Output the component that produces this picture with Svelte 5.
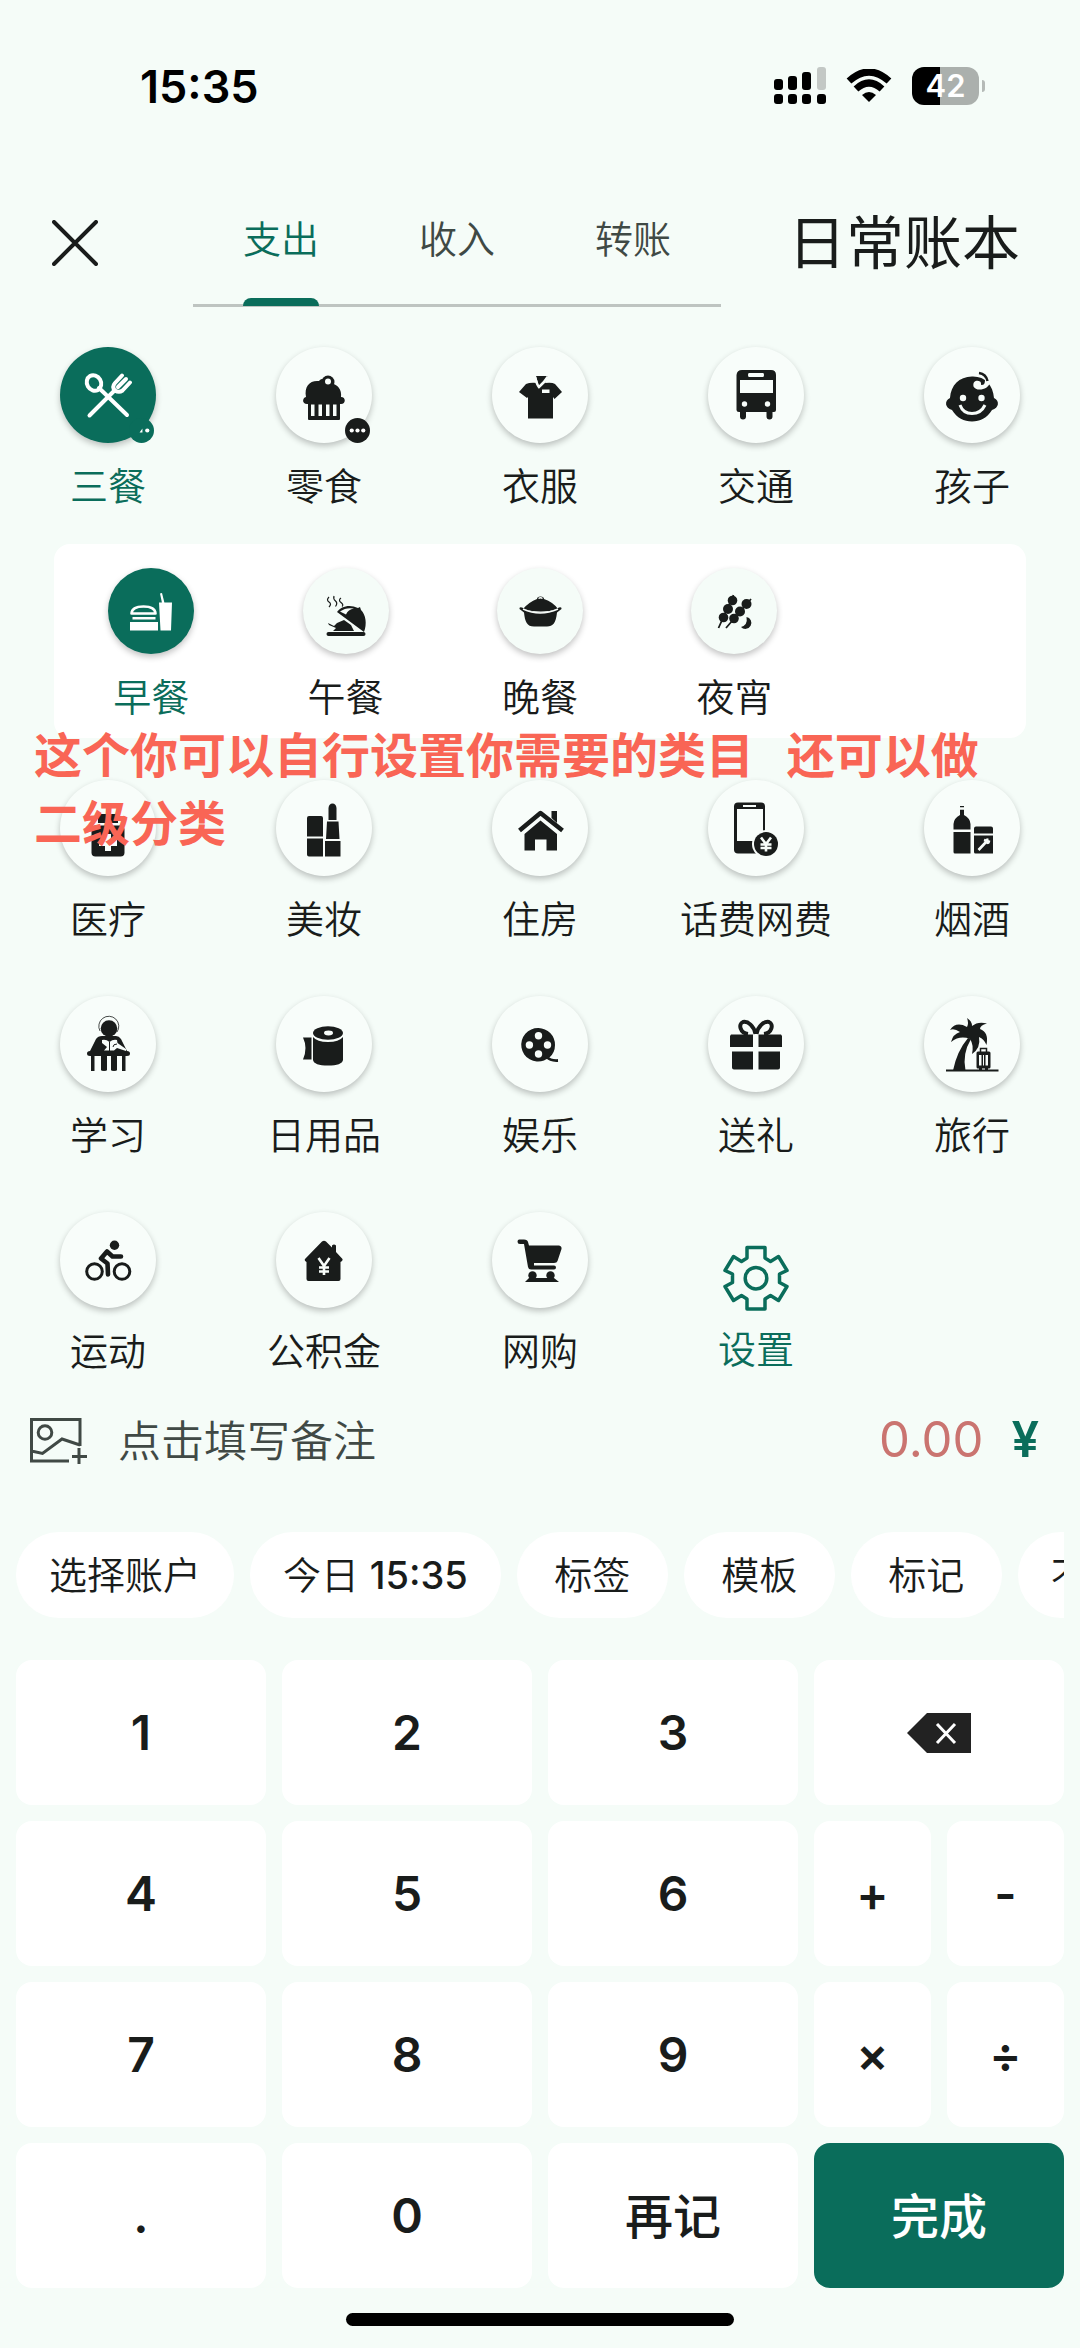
<script>
  const icons = {
    meals: '<g class="line"><ellipse cx="34" cy="36" rx="7" ry="8" transform="rotate(-30 34 36)"/><path d="M39 41 67 68M29.500 68.500 55 43M62 28.500 55 36Q51.500 40 55 43.500 59 46 62.500 43.500L70 35.500M66 32 58 40"/></g>',
    snack: '<circle cx="52" cy="35" r="6.500"/><path d="M30 50C28 39 34 33 43 34 46 30 52 32 54 36 62 37 66 43 65 50 70 50 70 57 65 57H31C26 57 26 51 30 50Z"/><rect x="32" y="55" width="32" height="18" rx="1"/><circle class="cut" cx="52" cy="34.500" r="3"/><path class="cut" d="M35 57.500h3.500V69H35zM42.500 57.500H46V69h-3.500zM50 57.500h3.500V69H50zM57 57.500h3.500V69H57z"/>',
    clothes: '<path d="M44 29 56 29 53 36Q60 35 63 37L70 45 62.500 52 61 50V71.500H36V50L35 51 27 45 34 37Q38 35 46 36Z"/><path class="cutline" d="M43 30Q45 38 47 40 52 36 56 29.500"/><path class="cut" d="M50 42.500h7.500V46H50z"/>',
    bus: '<path d="M34 23H63Q68 23 68 28V63Q68 65 66 65H64.500V69.500A3 3 0 0 1 58.500 69.500V65H38V69.500A3 3 0 0 1 32 69.500V65H31Q28.500 65 28.500 63V28Q29 23 34 23Z"/><path class="cut" d="M41 26H55Q56 26 56 28T55 30H41Q40 30 40 28T41 26ZM32 33H65V46H32Z"/><circle class="cut" cx="36.500" cy="57" r="2.700"/><circle class="cut" cx="59.500" cy="57" r="2.700"/>',
    child: '<path d="M48 29.500C61 29 69 38 70 51 76 54 75 61 68 63 63 71 56 74.500 48 74.500 40 74.500 33 71 28 63 21 61 20 54 26 51 27 38 35 30 48 29.500Z"/><path class="cut" d="M66 35C65 43 52 45 49.500 39.500 48.500 34 53 33 56 34.500 58 36 56 38 58 38 61 38 61 35 61 31L68 32Z"/><path d="M55 26Q62 27 63.500 34" fill="none" stroke="currentColor" stroke-width="2.500"/><circle class="cut" cx="39" cy="51" r="3.200"/><circle class="cut" cx="57.500" cy="51" r="3.200"/><path class="cutline thick" d="M36 58Q39 66.500 48 66.500T61 58"/>',
    breakfast: '<path d="M23.500 45.500Q24 38.500 35.500 38.500T47.500 45.500Z" fill="none" stroke="currentColor" stroke-width="2.600" stroke-linejoin="round"/><path d="M24.500 49H47.500V51.500H24.500ZM22 54H50V62.500H22ZM51 34.500H64L63 62.500H52.500ZM52 25.500 54 25 56.500 35H54Z"/>',
    lunch: '<g fill="none" stroke="currentColor" stroke-width="1.200"><path d="M26 29q-3 3 0 5t0 5M31 28q-1 3 1.500 5t0 5.500M38 30q-3 2 0 4.500t1 4"/></g><path d="M34 44C38 38 47 36 55 40L57 39 58 42C63 47 64 56 61 64Z"/><path class="cut" d="M37 43.500Q43 39 51 40.500 45 41.500 43 46.500Z"/><path d="M25 55 31 58 34 55 41 52 48 57 51 63H30L33 60 26 57Z"/><rect x="23.500" y="64" width="39" height="4" rx="2"/>',
    dinner: '<path d="M26 41Q32 34 40 31 40 28.500 43.500 28.500T47 31Q56 34 61 41 44 46 26 41Z"/><path d="M22.500 41Q22 38.500 25 39.500 44 50 62 39.500 65 38.500 64.500 41L60 44.500C59 55 56 58.500 50 58.500H37C30 58.500 28 54 27 44.500Z"/><path class="cutline thin" d="M26 41Q43 49 61 41M41.500 30.500Q43.500 29 45.500 30.500"/>',
    supper: '<path d="M42.500 27 27.500 60M60 31 35 60" stroke="currentColor" stroke-width="1.800"/><circle cx="41.500" cy="32.500" r="4.800"/><circle cx="37" cy="41" r="5"/><circle cx="32.500" cy="49.500" r="4.800"/><circle cx="55.500" cy="36" r="5"/><circle cx="49" cy="43.500" r="5"/><circle cx="43" cy="50.500" r="4.800"/><path d="M55.500 49A6 6 0 1 1 50 59Q57 57 55.500 49Z"/>',
    medical: '<path d="M40 34H56Q58 34 58 36V43H38V36Q38 34 40 34Z"/><rect x="31.500" y="45.500" width="33" height="31" rx="4"/><path class="cut" d="M45 54H51V60H57V66H51V71H45V66H39V60H45Z"/>',
    beauty: '<path d="M52.500 40V28Q53 23.500 56.500 23.500T60.500 28V40ZM51 41.500H62.500L63.500 59H50ZM49 61H64.500V76.500H49ZM31 38Q31 36 33 36H45Q47 36 47 38V56.500H31ZM31 58.500H47V76.500H33Q31 76.500 31 74.500Z"/>',
    home: '<path d="M48.500 40.500 32.500 54V70.500H43V59.500H54.500V70.500H65V54Z"/><path d="M27.500 50.500 48.500 33 70.500 50.500" fill="none" stroke="currentColor" stroke-width="4.500" stroke-linejoin="round"/><path d="M59.500 31H65V43L59.500 38Z"/>',
    phone: '<rect x="26" y="22.500" width="31" height="51" rx="4"/><path class="cut" d="M29 29H55V61H29ZM35 25H48V27H35Z"/><circle class="cut" cx="58" cy="64" r="14"/><circle cx="58" cy="64" r="12"/><path class="cutline" d="M53 57.500 58 64 63 57.500M58 64V71.500M52.500 64.500H63.500M52.500 68H63.500"/>',
    drink: '<path d="M36 26H40V35Q46 38 46.500 44V49.500H29.500V44Q30 38 36 35ZM29.500 52H46.500V73.500H31Q29.500 73.500 29.500 72ZM52 46.500H67Q69 46.500 69 48.500V53.500H50V48.500Q50 46.500 52 46.500ZM50 55.500H69V73.500H51.500Q50 73.500 50 72Z"/><path class="cutline" d="M35 28.500H41M54.500 70 63 61M60 60 66 62M63 58.500 64 64"/>',
    study: '<circle cx="49" cy="32.500" r="8.300"/><path d="M40 35A10 10 0 1 1 57 36" fill="none" stroke="currentColor" stroke-width=".8"/><path d="M42 40H56Q59 40 61 43L67 55Q70 55 70 57.500T67 60H65.500V75H62V60H57V74Q57 75 54 75T51 74V60H47V74Q47 75 44 75T41 74V60H34.500V75H31V60H30Q27 60 27 57.500T30 55L36 43Q38 40 42 40Z"/><path class="cut" d="M42 44Q46 43 49.500 46 53 43 57 44L57.500 47 66 53V55L57 52 54 54.500H44L47 51 42 47Z"/><path d="M49.500 46V55M53 51Q53 48 57 48" fill="none" stroke="currentColor" stroke-width="1"/>',
    daily: '<ellipse cx="52" cy="37" rx="15" ry="6.800"/><ellipse class="cut" cx="52.500" cy="37" rx="4.500" ry="2.400"/><path d="M37 41Q41 46 52 46T67 41V64Q66 69.500 52 69.500T37 64ZM27 41.500H35.500V63.500H27Q32 52 27 41.500Z"/>',
    film: '<path d="M46.500 32A16.800 16.800 0 1 0 52 64.500Q54 63 57 62 63 57 63 49A16.800 16.800 0 0 0 46.500 32Z"/><path d="M55 61Q58 65 66 64.500" fill="none" stroke="currentColor" stroke-width="2.800"/><circle class="cut" cx="46.500" cy="39.800" r="3.700"/><circle class="cut" cx="46.500" cy="58" r="3.700"/><circle class="cut" cx="37.400" cy="49" r="3.700"/><circle class="cut" cx="55.500" cy="49" r="3.700"/>',
    gift: '<path d="M23 38.500H45V51H22V40ZM50.500 38.500H73L74 40V51H50.500ZM24 55.500H45V73.500H26Q24 73.500 24 71.500ZM50.500 55.500H72V71.500Q72 73.500 70 73.500H50.500Z"/><path d="M47.500 38C46 30 40 25 35 26 30 28 32 37 40 38M48.500 38C50 30 56 25 61 26 66 28 64 37 56 38" fill="none" stroke="currentColor" stroke-width="4"/>',
    travel: '<path d="M44 42Q33 55 29 74.500H41.500Q38 58 47 43Z"/><path d="M43 22Q48 25 48 30 54 25 63 27.500 56 29 56 33 65 36 62.500 49 60 43 55 41 57 52 48 58 50 49 46 43 36 39 27 46 29 38 36 36 30 32 26 34 32 25 43 31 45 27 43 22Z"/><path d="M22 74.500H74.500" stroke="currentColor" stroke-width="2"/><path d="M56.500 56V52.500H62.500V56" fill="none" stroke="currentColor" stroke-width="1.500"/><path d="M54 55.500H65Q66.500 55.500 66.500 57V71Q66.500 72.500 65 72.500H54Q52.500 72.500 52.500 71V57Q52.500 55.500 54 55.500ZM55 72H58V75H55ZM61 72H64V75H61Z"/><path class="cut" d="M55 59H57.500V69.500H55ZM61.500 59H64V69.500H61.500ZM59 59H60V69.500H59Z"/>',
    sport: '<g fill="none" stroke="currentColor" stroke-width="3"><circle cx="34.500" cy="59.500" r="7.800"/><circle cx="62" cy="59.500" r="7.800"/><path d="M61 44.500H52.500L47 39.500 41 46.500 47.500 51.500 48 62.500" stroke-width="4.600" stroke-linecap="round" stroke-linejoin="round"/></g><circle cx="54.500" cy="33.200" r="4.700"/>',
    fund: '<path d="M46 29.500Q48 28 50 29.500L56 35.500V33.500Q58 31.500 60 33.500V40L66.500 47Q67 49 64.500 50V67Q64.500 69 62.500 69H32.500Q30.500 69 30.500 67V50Q28 49 29 47Z"/><path class="cutline" d="M42.500 46 48 54 53.500 46M48 54V63M43 55.500H53M43 59.500H53"/>',
    cart: '<path d="M27.500 27.500H32Q35.500 27.500 36 30L37 33.500H67Q70 34 69.500 37L65.500 49Q65 51 62 51H42V53.500H62Q64 53.500 64 55.500T62 57.500H39Q36.500 57.500 36 55L32 32H28Q25.500 32 25.500 29.700T27.500 27.500Z"/><circle cx="40.500" cy="63.500" r="4.200"/><circle cx="58.500" cy="63.500" r="4.200"/><path d="M33 70 37 66H62L67 70Z"/>'
  };

  const firstRow = [
    { name: '三餐', icon: 'meals', more: true },
    { name: '零食', icon: 'snack', more: true },
    { name: '衣服', icon: 'clothes' },
    { name: '交通', icon: 'bus' },
    { name: '孩子', icon: 'child' }
  ];

  const subCategories = [
    { name: '早餐', icon: 'breakfast' },
    { name: '午餐', icon: 'lunch' },
    { name: '晚餐', icon: 'dinner' },
    { name: '夜宵', icon: 'supper' }
  ];

  const otherRows = [
    { name: '医疗', icon: 'medical' },
    { name: '美妆', icon: 'beauty' },
    { name: '住房', icon: 'home' },
    { name: '话费网费', icon: 'phone' },
    { name: '烟酒', icon: 'drink' },
    { name: '学习', icon: 'study' },
    { name: '日用品', icon: 'daily' },
    { name: '娱乐', icon: 'film' },
    { name: '送礼', icon: 'gift' },
    { name: '旅行', icon: 'travel' },
    { name: '运动', icon: 'sport' },
    { name: '公积金', icon: 'fund' },
    { name: '网购', icon: 'cart' }
  ];

  const tabs = ['支出', '收入', '转账'];
  const chips = [
    { label: '选择账户' },
    { label: '今日', time: '15:35' },
    { label: '标签' },
    { label: '模板' },
    { label: '标记' },
    { label: '不计收支' }
  ];
  const keys = ['1', '2', '3', 'del', '4', '5', '6', '+', '-', '7', '8', '9', '×', '÷', '.', '0', '再记', '完成'];

  let tab = $state('支出');
  let category = $state('三餐');
  let sub = $state('早餐');
  let note = $state('');

  function keyClass(key) {
    if ('+-×÷'.includes(key)) return 'key key--half';
    if (key === '再记') return 'key key--text';
    if (key === '完成') return 'key key--text key--done';
    return 'key';
  }
</script>

{#snippet item(cat)}
  <button class="cat" class:cat--active={category === cat.name} onclick={() => (category = cat.name)}>
    <span class="cat__circle">
      <svg class="icon" viewBox="0 0 96 96" aria-hidden="true">{@html icons[cat.icon]}</svg>
      {#if cat.more}
        <svg class="cat__more" viewBox="0 0 26 26" aria-hidden="true">
          <circle cx="13" cy="13" r="13" fill="currentColor" />
          {#if category === cat.name}
            <path d="M14 11V15H11Z" fill="#fff" />
          {:else}
            <circle cx="7" cy="13" r="2.200" fill="#fff" />
            <circle cx="13" cy="13" r="2.200" fill="#fff" />
          {/if}
          <circle cx="19" cy="13" r="2.200" fill="#fff" />
        </svg>
      {/if}
    </span>
    <span class="cat__name">{cat.name}</span>
  </button>
{/snippet}

<main>
  <div class="status">
    <span class="status__time">15:35</span>
    <div class="status__icons">
      <svg width="52" height="38" viewBox="0 0 52 38" aria-hidden="true">
        <rect x="0" y="12" width="9" height="11" rx="3" />
        <rect x="14" y="9" width="9" height="14" rx="3" />
        <rect x="28" y="5" width="9" height="18" rx="3" />
        <rect x="43" y="0" width="9" height="23" rx="3" fill="#c3c8c5" />
        <rect x="0" y="27" width="9" height="10" rx="3" />
        <rect x="14" y="27" width="9" height="10" rx="3" />
        <rect x="28" y="27" width="9" height="10" rx="3" />
        <rect x="43" y="27" width="9" height="10" rx="3" />
      </svg>
      <svg width="46" height="34" viewBox="0 0 46 34" aria-hidden="true">
        <path d="M3 12Q23-6 43 12" fill="none" stroke="#000" stroke-width="7" />
        <path d="M10 20Q23 8 36 20" fill="none" stroke="#000" stroke-width="7" />
        <path d="M16 26Q23 20 30 26L23 33Z" />
      </svg>
      <span class="battery">42</span>
    </div>
  </div>

  <header class="header">
    <button class="close" aria-label="关闭">
      <svg width="46" height="46" viewBox="0 0 46 46" aria-hidden="true">
        <path d="M2 2 44 44M44 2 2 44" stroke="currentColor" stroke-width="4" stroke-linecap="round" />
      </svg>
    </button>
    <div class="tabs" role="tablist">
      {#each tabs as name}
        <button class="tab" class:tab--active={tab === name} role="tab" aria-selected={tab === name} onclick={() => (tab = name)}>
          <span class="tab__name">{name}</span>
        </button>
      {/each}
    </div>
    <button class="book">日常账本</button>
  </header>

  <section class="cats">
    <div class="grid">
      {#each firstRow as cat}
        {@render item(cat)}
      {/each}
    </div>

    <div class="panel">
      {#each subCategories as cat}
        <button class="cat cat--sub" class:cat--active={sub === cat.name} onclick={() => (sub = cat.name)}>
          <span class="cat__circle">
            <svg class="icon" viewBox="0 0 86 86" aria-hidden="true">{@html icons[cat.icon]}</svg>
          </span>
          <span class="cat__name">{cat.name}</span>
        </button>
      {/each}
    </div>

    <div class="grid">
      {#each otherRows as cat}
        {@render item(cat)}
      {/each}
      <button class="cat cat--settings">
        <svg width="66" height="66" viewBox="0 0 66 66" aria-hidden="true">
          <path d="M24 2.500H42V13L47.500 16.500 55.500 11.500 64 25.500 56.500 29V37.500L64 41.500 55.500 55.500 47.500 50.500 42 54V64H24V54L18.500 50.500 10.500 55.500 2 41.500 9.500 37.500V29L2 25.500 10.500 11.500 18.500 16.500 24 13Z" fill="none" stroke="currentColor" stroke-width="3.500" stroke-linejoin="round" />
          <circle cx="33" cy="33.200" r="10.800" fill="none" stroke="currentColor" stroke-width="3.500" />
        </svg>
        <span class="cat__name">设置</span>
      </button>
    </div>

    <p class="hint">这个你可以自行设置你需要的类目&nbsp;&nbsp;&nbsp;还可以做二级分类</p>
  </section>

  <section class="note">
    <svg width="58" height="48" viewBox="0 0 58 48" aria-hidden="true">
      <g fill="none" stroke="currentColor" stroke-width="3">
        <path d="M50 29V2.500H1.500V44H39M1.500 34 12.500 36.500 32 22 50 28M49 31V47M42 39.500H57" />
        <circle cx="15" cy="15.500" r="6.800" />
      </g>
    </svg>
    <input class="note__text" type="text" aria-label="备注" placeholder="点击填写备注" bind:value={note} />
    <span class="note__amount">0.00</span>
    <span class="note__unit">¥</span>
  </section>

  <div class="chips">
    {#each chips as chip}
      <button class="chip">{chip.label}{#if chip.time}{' '}<span class="chip__time">{chip.time}</span>{/if}</button>
    {/each}
  </div>

  <section class="keypad">
    {#each keys as key}
      {#if key === 'del'}
        <button class="key" aria-label="删除">
          <svg width="64" height="42" viewBox="0 0 64 42" aria-hidden="true">
            <path d="M20 1H64V41H20L0 21Z" fill="#222" />
            <path d="M30 12 48 31M48 12 30 31" stroke="#fff" stroke-width="3" />
          </svg>
        </button>
      {:else}
        <button class={keyClass(key)}>{key}</button>
      {/if}
    {/each}
  </section>

  <div class="home-bar"></div>
</main>

<style>
  :global(body) {
    background: #f5fcf8;
  }
  main {
    --green: #0a6d5b;
    --bg: #f5fcf8;
    color: #191c1b;
    background: var(--bg);
    font-family: Inter, "Noto Sans CJK SC", sans-serif;
    overflow: hidden;
    padding-bottom: 21px;
  }
  button {
    border: 0;
    padding: 0;
    margin: 0;
    background: none;
    color: inherit;
    font: inherit;
    cursor: pointer;
  }
  svg {
    display: block;
    flex: none;
  }

  .status {
    display: flex;
    align-items: center;
    justify-content: space-between;
    height: 172px;
    padding: 0 94px 0 140px;
    color: #000;
  }
  .status__time {
    font-size: 45px;
    font-weight: 600;
  }
  .status__icons {
    display: flex;
    align-items: center;
    gap: 20px;
  }
  .battery {
    position: relative;
    width: 67px;
    height: 38px;
    margin-right: 7px;
    border-radius: 12px;
    background: linear-gradient(to right, #000 42%, #abb0ad 42%);
    color: #fff;
    font-size: 31px;
    font-weight: 600;
    line-height: 38px;
    text-align: center;
  }
  .battery::after {
    content: "";
    position: absolute;
    right: -6px;
    top: 13px;
    width: 3px;
    height: 12px;
    border-radius: 0 3px 3px 0;
    background: #b5bab7;
  }

  .header {
    display: flex;
    height: 135px;
    margin-bottom: 40px;
  }
  .close {
    display: flex;
    align-items: center;
    width: 193px;
    height: 142px;
    padding-left: 52px;
  }
  .tabs {
    display: flex;
    flex: 1;
    border-bottom: 3px solid #bec4c1;
  }
  .tab {
    display: flex;
    flex: 1;
    justify-content: center;
    color: #3f4945;
    font-size: 38px;
    font-weight: 350;
    line-height: 40px;
  }
  .tab__name {
    position: relative;
    height: 85px;
    padding-top: 47px;
  }
  .tab--active {
    color: var(--green);
  }
  .tab--active .tab__name::after {
    content: "";
    position: absolute;
    left: 0;
    right: 0;
    bottom: -2px;
    height: 8px;
    border-radius: 8px 8px 0 0;
    background: var(--green);
  }
  .book {
    height: 142px;
    width: 359px;
    padding-right: 60px;
    font-size: 58px;
    font-weight: 400;
    line-height: 60px;
    text-align: right;
  }

  .cats {
    position: relative;
  }
  .grid {
    display: grid;
    grid-template-columns: repeat(5, 1fr);
    row-gap: 56px;
  }
  .panel {
    display: grid;
    grid-template-columns: repeat(5, 1fr);
    margin: 37px 54px 42px;
    padding: 24px 0 20px;
    border-radius: 16px;
    background: #fff;
  }
  .cat {
    display: flex;
    flex-direction: column;
    align-items: center;
    gap: 23px;
  }
  .cat__circle {
    position: relative;
    width: 96px;
    height: 96px;
    border-radius: 50%;
    background: #f8fdfa;
    box-shadow: 0 3px 6px rgba(0, 0, 0, 0.24);
  }
  .cat--sub .cat__circle {
    width: 86px;
    height: 86px;
    background: var(--bg);
  }
  .cat__name {
    padding-bottom: 1px;
    font-size: 38px;
    font-weight: 350;
    line-height: 40px;
    white-space: nowrap;
  }
  .cat__more {
    position: absolute;
    right: 2px;
    bottom: 0;
    width: 25px;
    height: 25px;
    color: #191c1b;
  }
  .cat--active {
    color: var(--green);
  }
  .cat--active .cat__circle {
    background: var(--green);
  }
  .cat--active .icon {
    color: #fff;
  }
  .cat--active .cat__more {
    color: var(--green);
  }
  .cat--settings {
    gap: 18px;
    padding-top: 33px;
    color: var(--green);
  }
  .icon {
    width: 100%;
    height: 100%;
    fill: currentColor;
  }
  .icon :global(.cut) {
    fill: #f8fdfa;
  }
  .icon :global(.cutline) {
    fill: none;
    stroke: #f8fdfa;
    stroke-width: 2.6;
  }
  .icon :global(.thick) {
    stroke-width: 3;
  }
  .icon :global(.thin) {
    stroke-width: 1.4;
  }
  .icon :global(.line) {
    fill: none;
    stroke: currentColor;
    stroke-width: 4;
    stroke-linecap: round;
    stroke-linejoin: round;
  }

  /* red caption lies over the category rows */
  .hint {
    position: absolute;
    top: 371px;
    left: 34px;
    right: 60px;
    margin: 0;
    color: #f96555;
    font-size: 48px;
    font-weight: 700;
    line-height: 68px;
    font-family: "Noto Sans CJK SC", sans-serif;
    pointer-events: none;
  }

  .note {
    display: flex;
    align-items: center;
    height: 138px;
    margin-bottom: 22px;
    padding: 0 41px 0 30px;
    color: #404945;
  }
  .note__text {
    flex: 1;
    min-width: 0;
    height: 60px;
    margin-left: 30px;
    padding: 0;
    border: 0;
    outline: 0;
    background: none;
    color: inherit;
    font: inherit;
    font-size: 43px;
    font-weight: 350;
  }
  .note__text::placeholder {
    color: #404945;
    opacity: 1;
  }
  .note__amount,
  .note__unit {
    padding-bottom: 3px;
    font-size: 49px;
  }
  .note__amount {
    color: #ca7470;
    font-weight: 400;
  }
  .note__unit {
    margin-left: 28px;
    color: var(--green);
    font-weight: 600;
  }

  .chips {
    display: flex;
    gap: 16px;
    margin: 0 16px 42px;
    overflow: hidden;
  }
  .chip {
    flex: none;
    min-width: 151px;
    height: 86px;
    padding: 0 33px;
    border-radius: 43px;
    background: #fff;
    font-size: 38px;
    font-weight: 350;
    line-height: 40px;
    white-space: nowrap;
  }
  .chip__time {
    font-weight: 500;
  }

  .keypad {
    display: grid;
    grid-template-columns: repeat(8, 1fr);
    grid-auto-rows: 145px;
    gap: 16px;
    padding: 0 16px;
  }
  .key {
    display: flex;
    grid-column: span 2;
    align-items: center;
    justify-content: center;
    border-radius: 16px;
    background: #fff;
    font-size: 48px;
    font-weight: 600;
  }
  .key--half {
    grid-column: span 1;
  }
  .key--text {
    padding-bottom: 6px;
    font-family: "Noto Sans CJK SC", sans-serif;
    font-weight: 500;
    line-height: 48px;
  }
  .key--done {
    background: var(--green);
    color: #fff;
  }

  .home-bar {
    width: 36%;
    height: 13px;
    margin: 25px auto 0;
    border-radius: 7px;
    background: #000;
  }
</style>
